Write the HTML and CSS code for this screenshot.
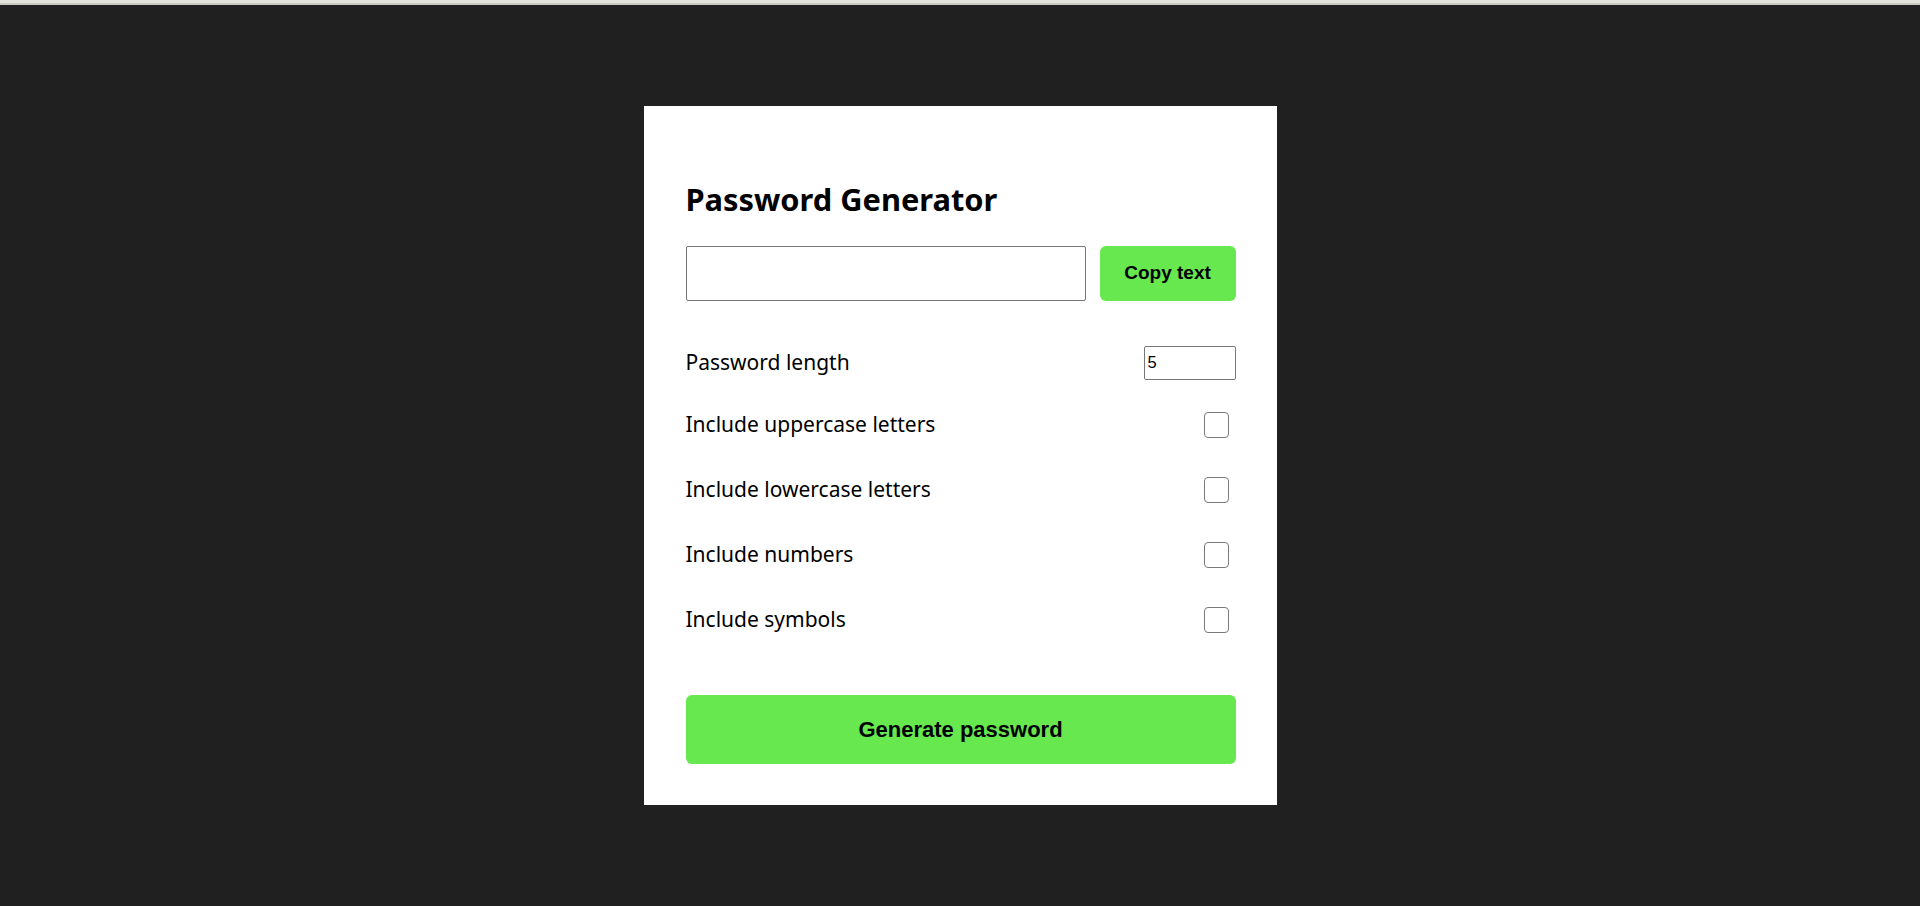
FILE: index.html
```html
<!DOCTYPE html>
<html lang="en">
<head>
<meta charset="utf-8">
<title>Password Generator</title>
<link rel="stylesheet" href="styles.css">
</head>
<body>
<div class="topbar"></div>
<main class="page">
  <section class="card">
    <h1 class="title">Password Generator</h1>
    <div class="output-row">
      <input class="output" type="text" readonly>
      <button class="btn btn-copy" type="button">Copy text</button>
    </div>
    <div class="options">
      <div class="option option-first">
        <label class="label" for="len">Password length</label>
        <input class="num" id="len" type="number" value="5">
      </div>
      <div class="option">
        <label class="label" for="up">Include uppercase letters</label>
        <input class="check" id="up" type="checkbox">
      </div>
      <div class="option">
        <label class="label" for="low">Include lowercase letters</label>
        <input class="check" id="low" type="checkbox">
      </div>
      <div class="option">
        <label class="label" for="numb">Include numbers</label>
        <input class="check" id="numb" type="checkbox">
      </div>
      <div class="option">
        <label class="label" for="sym">Include symbols</label>
        <input class="check" id="sym" type="checkbox">
      </div>
    </div>
    <button class="btn btn-generate" type="button">Generate password</button>
  </section>
</main>
</body>
</html>
```
FILE: styles.css
```css
* { box-sizing: border-box; }
html, body { margin: 0; padding: 0; height: 100%; }
body {
  background: #202020;
  font-family: "Noto Sans", "Open Sans", sans-serif;
  color: #000;
  display: flex;
  flex-direction: column;
}
.topbar {
  height: 5px;
  background: #e2e1da;
  border-bottom: 2px solid #c9c8c1;
  flex: none;
}
.page {
  flex: 1;
  display: flex;
  align-items: center;
  justify-content: center;
}
.card {
  width: 633px;
  height: 699px;
  background: #fff;
  padding: 73px 41px 0 42px;
  display: flex;
  flex-direction: column;
}
.title {
  margin: 0;
  font-size: 30.8px;
  line-height: 40px;
  font-weight: 700;
  letter-spacing: 0;
}
.output-row {
  display: flex;
  gap: 14px;
  margin-top: 27px;
  height: 55px;
}
.output {
  flex: 1;
  height: 55px;
  border: 1px solid #767676;
  border-radius: 2px;
  margin: 0;
  font-size: 16px;
}
.btn {
  border: none;
  background: #66e84e;
  border-radius: 6px;
  font-family: "Liberation Sans", Arial, sans-serif;
  font-weight: 700;
  color: #000;
  cursor: pointer;
  margin: 0;
}
.btn-copy {
  width: 136px;
  height: 55px;
  font-size: 19px;
  padding-bottom: 2px;
}
.options {
  margin-top: 32px;
  display: flex;
  flex-direction: column;
}
.option {
  height: 65px;
  display: flex;
  align-items: center;
  justify-content: space-between;
}
.option-first { height: 59px; }
.label {
  font-size: 21px;
  margin-bottom: 2px;
}
.num {
  width: 92px;
  height: 34px;
  border: 1px solid #767676;
  border-radius: 2px;
  padding: 1px 3px;
  font-family: "Liberation Sans", Arial, sans-serif;
  font-size: 16.5px;
  margin: 0;
}
.check {
  appearance: none;
  -webkit-appearance: none;
  width: 25px;
  height: 26px;
  border: 1.5px solid #7a7a7a;
  border-radius: 4px;
  background: #fff;
  margin: 0 7px 0 0;
}
.btn-generate {
  margin-top: 43px;
  height: 69px;
  width: 100%;
  font-size: 22px;
}
```
